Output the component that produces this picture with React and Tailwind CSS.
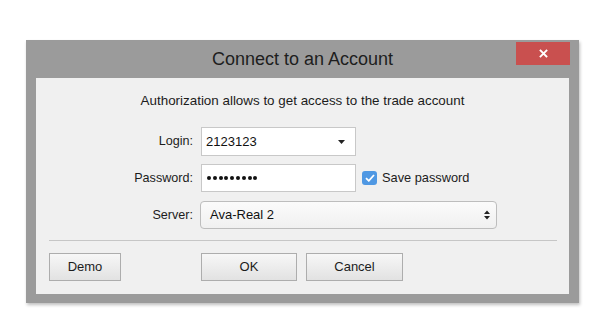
import React from "react";

const font = { fontFamily: '"Liberation Sans", Arial, sans-serif' };

function Field({ label, children }) {
  return (
    <div className="flex items-center">
      <span className="w-[144px] text-right text-[12.6px] text-[#1c1c1c]">{label}</span>
      <div className="ml-[8px] flex items-center">{children}</div>
    </div>
  );
}

function Button({ children, className = "" }) {
  return (
    <button
      className={
        "h-[28px] border border-[#adadad] bg-gradient-to-b from-[#f7f7f7] to-[#e2e2e2] text-[13px] text-[#1c1c1c] " +
        className
      }
    >
      {children}
    </button>
  );
}

export default function App() {
  return (
    <div className="min-h-[323px] w-[608px] bg-white pl-[26px] pt-[40px]" style={font}>
      <div className="relative w-[553px] bg-[#9b9b9b] px-[10px] pb-[9px] shadow-[1px_2px_3px_rgba(0,0,0,0.25)]">
        <div className="flex h-[38px] items-center justify-center text-[18px] text-[#1e1e1e]">
          Connect to an Account
        </div>
        <button className="absolute right-[9px] top-[2px] flex h-[23px] w-[54px] items-center justify-center bg-[#c9504f]">
          <svg width="9" height="9" viewBox="0 0 9 9">
            <path d="M1.5 1.5 L7.5 7.5 M7.5 1.5 L1.5 7.5" stroke="#fff" strokeWidth="1.8" strokeLinecap="square" />
          </svg>
        </button>

        <div className="flex h-[216px] flex-col bg-[#f0f0f0] px-[13px] pt-[15px]">
          <p className="text-center text-[13.4px] leading-[16px] text-[#1c1c1c]">
            Authorization allows to get access to the trade account
          </p>

          <div className="mt-[18px] flex flex-col">
            <Field label="Login:">
              <div className="flex h-[29px] w-[155px] items-center justify-between border border-[#c8c8c8] bg-white pl-[4px] pr-[10px] text-[13px] text-[#111]">
                <span>2123123</span>
                <svg width="7" height="4" viewBox="0 0 7 4">
                  <path d="M0 0 H7 L3.5 4 Z" fill="#222" />
                </svg>
              </div>
            </Field>
            <div className="mt-[8px]">
              <Field label="Password:">
                <div className="flex h-[28px] w-[155px] items-center border border-[#c8c8c8] bg-white pl-[5px]">
                  <div className="flex gap-[1.8px]">
                    {Array.from({ length: 9 }).map((_, i) => (
                      <span key={i} className="h-[4px] w-[4px] rounded-full bg-[#111]" />
                    ))}
                  </div>
                </div>
                <span className="ml-[6px] flex h-[14px] w-[15px] items-center justify-center rounded-[3px] bg-[#4f98e3]">
                  <svg width="10" height="8" viewBox="0 0 10 8">
                    <path d="M1 4.2 L3.8 6.8 L9 1" stroke="#fff" strokeWidth="1.8" fill="none" />
                  </svg>
                </span>
                <span className="ml-[5px] text-[12.8px] text-[#1c1c1c]">Save password</span>
              </Field>
            </div>
            <div className="mt-[9px]">
              <Field label="Server:">
                <div className="-ml-[1px] flex h-[28px] w-[297px] items-center justify-between rounded-[4px] border border-[#bdbdbd] bg-gradient-to-b from-[#fbfbfb] to-[#f0f0f0] pl-[9px] pr-[6px] text-[13px] text-[#111]">
                  <span>Ava-Real 2</span>
                  <svg width="6" height="10" viewBox="0 0 6 10">
                    <path d="M0 4 L3 0.5 L6 4 Z M0 6 L3 9.5 L6 6 Z" fill="#222" />
                  </svg>
                </div>
              </Field>
            </div>
          </div>

          <div className="mt-[11px] h-px w-[508px] bg-[#c6c6c6]" />

          <div className="mt-[12px] flex">
            <Button className="w-[72px]">Demo</Button>
            <Button className="ml-[80px] w-[96px]">OK</Button>
            <Button className="ml-[9px] w-[97px]">Cancel</Button>
          </div>
        </div>
      </div>
    </div>
  );
}
